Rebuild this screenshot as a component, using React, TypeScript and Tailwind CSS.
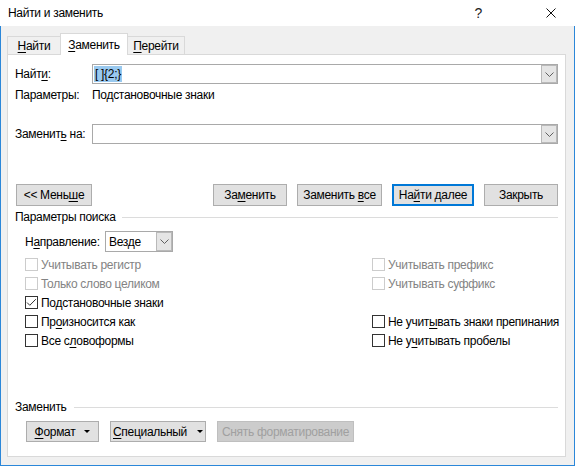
import React from "react";

const U = ({ children }: { children: React.ReactNode }) => (
  <span className="underline decoration-1 underline-offset-[2px]">{children}</span>
);

const Chevron = () => (
  <svg width="9" height="5" viewBox="0 0 9 5">
    <polyline points="0.5,0.5 4.5,4.5 8.5,0.5" fill="none" stroke="#606060" strokeWidth="1" />
  </svg>
);

const DropBtn = () => (
  <div className="w-[16px] h-full bg-[#e5e5e5] border border-[#b9b9b9] flex items-center justify-center">
    <Chevron />
  </div>
);

const Tri = () => (
  <svg width="6" height="3" viewBox="0 0 6 3">
    <polygon points="0,0 6,0 3,3" fill="#000" />
  </svg>
);

function Btn({ w, children, primary, disabled, h = "h-[22px]" }: { w: string; children: React.ReactNode; primary?: boolean; disabled?: boolean; h?: string }) {
  const cls = primary
    ? "border-2 border-[#0078d7] bg-[#e1e1e1]"
    : disabled
    ? "border border-[#bfbfbf] bg-[#cccccc] text-[#a0a0a0]"
    : "border border-[#adadad] bg-[#e1e1e1]";
  return (
    <div className={`${w} ${h} ${cls} flex items-center justify-center`}>
      <span className="whitespace-nowrap">{children}</span>
    </div>
  );
}

function Cb({ checked, disabled, children }: { checked?: boolean; disabled?: boolean; children: React.ReactNode }) {
  return (
    <div className="h-[19px] flex items-center whitespace-nowrap">
      <div
        className={`w-[13px] h-[13px] shrink-0 border bg-white flex items-center justify-center ${
          disabled ? "border-[#cccccc]" : "border-[#333333]"
        }`}
      >
        {checked && (
          <svg width="11" height="11" viewBox="0 0 11 11">
            <polyline points="1,5.5 3.8,8.3 9.8,2.2" fill="none" stroke="#333" strokeWidth="1" />
          </svg>
        )}
      </div>
      <span className={`ml-[3px] ${disabled ? "text-[#838383]" : "text-black"}`}>{children}</span>
    </div>
  );
}

export default function App() {
  return (
    <div className="w-[575px] h-[466px] overflow-hidden bg-white flex flex-col text-[12px] tracking-[-0.3px] leading-none text-black font-['Segoe_UI','Liberation_Sans',sans-serif]">
      {/* title bar */}
      <div className="h-[26px] flex items-center pl-[8px] shrink-0 relative">
        <span className="text-[12px]">Найти и заменить</span>
        <span className="ml-auto mr-[64px] text-[14px] text-[#222]">?</span>
        <svg className="mr-[19px]" width="10" height="10" viewBox="0 0 10 10">
          <path d="M0.5 0.5 L9.5 9.5 M9.5 0.5 L0.5 9.5" stroke="#111" strokeWidth="1" />
        </svg>
      </div>
      {/* body */}
      <div className="flex-1 bg-[#f0f0f0] border-x border-b border-[#2b87d9] pl-[6px] pr-[8px] pt-[7px] pb-[8px] flex flex-col">
        {/* tabs */}
        <div className="h-[21px] flex items-end shrink-0 relative z-10">
          <div className="w-[53px] h-[18px] border-t border-l border-[#d9d9d9] bg-[#f0f0f0] flex items-center justify-center pt-[1px]">
            <span><U>Н</U>айти</span>
          </div>
          <div className="w-[68px] h-[22px] -mb-px border-t border-x border-[#d9d9d9] bg-white flex items-center justify-center">
            <span><U>З</U>аменить</span>
          </div>
          <div className="w-[57px] h-[18px] border-t border-r border-[#d9d9d9] bg-[#f0f0f0] flex items-center justify-center pt-[1px]">
            <span><U>П</U>ерейти</span>
          </div>
        </div>
        {/* panel */}
        <div className="flex-1 bg-white border border-[#d9d9d9] px-[7px] pb-[14px] flex flex-col">
          <div className="mt-[9px] h-[20px] flex items-center">
            <span className="w-[77px]">Найт<U>и</U>:</span>
            <div className="flex-1 h-[20px] border border-[#a9a9a9] flex">
              <div className="flex-1 flex items-center pl-[1px]">
                <span className="bg-[#99c9ef] h-[16px] px-[1px] flex items-center whitespace-pre">[ ]{"{2;}"}</span>
              </div>
              <DropBtn />
            </div>
          </div>
          <div className="mt-[2px] h-[18px] flex items-center">
            <span className="w-[77px]">Параметры:</span>
            <span>Подстановочные знаки</span>
          </div>
          <div className="mt-[20px] h-[20px] flex items-center">
            <span className="w-[77px]">Заменит<U>ь</U> на:</span>
            <div className="flex-1 h-[20px] border border-[#a9a9a9] flex">
              <div className="flex-1" />
              <DropBtn />
            </div>
          </div>
          <div className="mt-[40px] h-[22px] flex">
            <div className="ml-[1px]">
              <Btn w="w-[76px]">{"<< Мень"}<U>ш</U>е</Btn>
            </div>
            <div className="ml-auto flex gap-[10px]">
              <Btn w="w-[74px]">За<U>м</U>енить</Btn>
              <Btn w="w-[85px]">Заменить <U>в</U>се</Btn>
              <Btn w="w-[82px]" primary>На<U>й</U>ти далее</Btn>
              <Btn w="w-[74px]">Закрыть</Btn>
            </div>
          </div>
          <div className="mt-[3px] h-[16px] flex items-center">
            <span>Параметры поиска</span>
            <div className="flex-1 h-px bg-[#dcdcdc] ml-[6px]" />
          </div>
          <div className="mt-[6px] h-[21px] flex items-center pl-[10px]">
            <span className="w-[80px]">Н<U>а</U>правление:</span>
            <div className="w-[68px] h-[21px] border border-[#a9a9a9] flex">
              <div className="flex-1 flex items-center pl-[3px]">Везде</div>
              <DropBtn />
            </div>
          </div>
          <div className="mt-[3px] grid grid-cols-[357px_1fr]">
            <div className="pl-[10px] flex flex-col">
              <Cb disabled>Учитывать регистр</Cb>
              <Cb disabled>Только слово целиком</Cb>
              <Cb checked>По<U>д</U>становочные знаки</Cb>
              <Cb>Пр<U>о</U>износится как</Cb>
              <Cb>Все с<U>л</U>овоформы</Cb>
            </div>
            <div className="flex flex-col">
              <Cb disabled>Учитывать префикс</Cb>
              <Cb disabled>Учитывать суффикс</Cb>
              <div className="h-[19px]" />
              <Cb>Не учит<U>ы</U>вать знаки препинания</Cb>
              <Cb>Не у<U>ч</U>итывать пробелы</Cb>
            </div>
          </div>
          <div className="mt-auto h-[16px] flex items-center">
            <span>Заменить</span>
            <div className="flex-1 h-px bg-[#dcdcdc] ml-[7px]" />
          </div>
          <div className="mt-[6px] h-[21px] pl-[11px] flex gap-[11px]">
            <Btn w="w-[73px]" h="h-[21px]">
              <span className="flex items-center gap-[9px]"><span><U>Ф</U>ормат</span><Tri /></span>
            </Btn>
            <Btn w="w-[96px]" h="h-[21px]">
              <span className="flex items-center gap-[10px]"><span><U>С</U>пециальный</span><Tri /></span>
            </Btn>
            <Btn w="w-[137px]" h="h-[21px]" disabled>Снять форматирование</Btn>
          </div>
        </div>
      </div>
    </div>
  );
}
